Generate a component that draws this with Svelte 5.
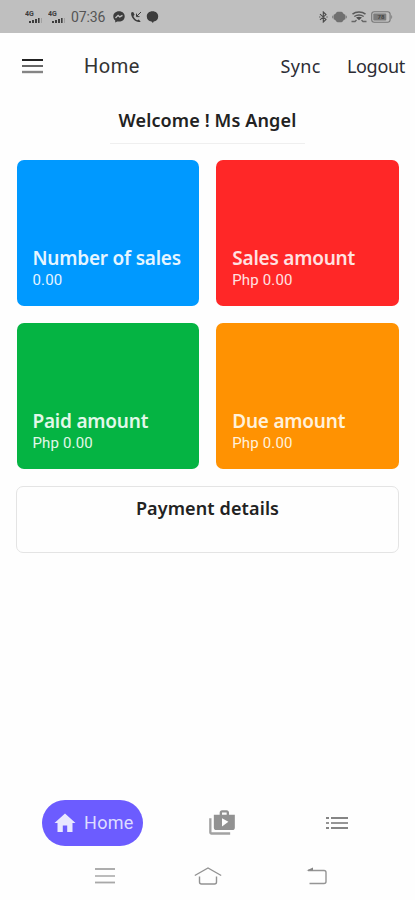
<script lang="ts">
  type Card = { title: string; value: string; tone: string };

  const cards: Card[] = [
    { title: 'Number of sales', value: '0.00', tone: 'blue' },
    { title: 'Sales amount', value: 'Php 0.00', tone: 'red' },
    { title: 'Paid amount', value: 'Php 0.00', tone: 'green' },
    { title: 'Due amount', value: 'Php 0.00', tone: 'orange' },
  ];
</script>

{#snippet signal()}
  <svg class="signal" width="17" height="14" viewBox="0 0 17 14">
    <text x="0" y="5.5">4G</text>
    <path d="M4 11h2v2H4zM7 10h2v3H7zM10 9h2v4h-2zM13 8h1.6v5H13z" fill="#3c3c3c" />
    <path d="M16 8h.8v5H16z" fill="#999" />
  </svg>
{/snippet}

<div class="screen">
  <div class="status">
    <div class="status-left">
      {@render signal()}
      {@render signal()}
      <span class="time">07:36</span>
      <svg class="messenger" width="12" height="12" viewBox="0 0 12 12">
        <path d="M6 .3C2.7.3.3 2.6.3 5.4c0 1.6.7 3 1.9 3.9v2.2l2-1.1c.6.1 1.2.2 1.8.2 3.3 0 5.7-2.3 5.7-5.2S9.3.3 6 .3z" fill="#3c3c3c" />
        <path d="M2.5 7l2.600-2.600 1.700 1.500 2.700-1.500" fill="none" stroke="#c0c0c0" stroke-width="1.3" />
      </svg>
      <svg class="call" width="12" height="12" viewBox="0 0 12 12">
        <path d="M1.5 1.200C.4 3 1.500 6 3.500 8.300s5 3.500 7.200 2.400l-1.900-2.200-1.700.8C5.500 8.500 3.900 6.700 3.400 5l1.200-1.300L3.200 1z" fill="#3c3c3c" />
        <path d="M11 1L6.800 5.200M6.500 2.600v3h3" fill="none" stroke="#3c3c3c" />
      </svg>
      <svg width="13" height="12" viewBox="0 0 13 12">
        <path d="M6.500.3C3 .3.8 2.500.8 5.400c0 2.700 1.900 4.700 4.700 5.100l1.400 1.400.8-1.400c2.700-.4 4.500-2.400 4.500-5.100C12.200 2.500 10 .3 6.500.3z" fill="#3c3c3c" />
      </svg>
    </div>
    <div class="status-right">
      <svg width="9" height="12" viewBox="0 0 9 12">
        <path d="M1 3.200l6 5.200-2.700 2.600V1L7 3.600 1 8.800M.2 6h1.200M7.400 6h1.200" fill="none" stroke="#4a4a4a" stroke-width="1.1" />
      </svg>
      <svg width="15" height="12" viewBox="0 0 15 12">
        <path d="M4.300 1.500L5.500.8h4l1.200.7 1 1.500 1.600.8v4.400l-1.600.8-1 1.500-1.200.7h-4l-1.200-.7-1-1.500-1.600-.8V3.800L3.300 3z" fill="#707070" />
        <path d="M.8 4.800v2.400M14.200 4.800v2.400" stroke="#7c7c7c" stroke-width="1.2" />
      </svg>
      <svg width="16" height="12" viewBox="0 0 16 12">
        <path d="M1.500 3.200C5 .4 11 .4 14.500 3.200M3.300 5.500c3-2 6.400-2 9.400 0" fill="none" stroke="#5a5a5a" stroke-width="1.5" />
        <path d="M5 6.500c1.700-1.100 4.300-1.100 6 0L8 9.300z" fill="#505050" />
        <path d="M.5 10.500H4l1.500-1.500M15.500 10.500H12l-1.500-1.500" fill="none" stroke="#666" stroke-width="1.4" />
      </svg>
      <svg width="22" height="12" viewBox="0 0 22 12">
        <rect x=".7" y=".8" width="18.4" height="10.4" rx="2.5" fill="none" stroke="#777" stroke-width="1.1" />
        <rect x="2.3" y="2.4" width="13" height="7.2" rx="1" fill="#7c7c7c" />
        <path d="M20.300 4c1.200.8 1.200 3.200 0 4z" fill="#777" />
        <text x="6.5" y="8.2" class="charge">78</text>
      </svg>
    </div>
  </div>

  <header>
    <svg class="menu" width="21" height="16" viewBox="0 0 21 16">
      <path d="M0 2h21" stroke="#222" stroke-width="2" />
      <path d="M0 8h21" stroke="#666" stroke-width="2" />
      <path d="M0 14h21" stroke="#858585" stroke-width="2.4" />
    </svg>
    <h1>Home</h1>
    <span class="action sync">Sync</span>
    <span class="action logout">Logout</span>
  </header>

  <main>
    <div class="welcome"><span>Welcome ! Ms Angel</span></div>
    <div class="cards">
      {#each cards as card}
        <div class="card {card.tone}">
          <h2>{card.title}</h2>
          <p>{card.value}</p>
        </div>
      {/each}
    </div>
    <div class="payment"><span>Payment details</span></div>
  </main>

  <nav class="tabs">
    <div class="active">
      <svg width="24" height="24" viewBox="0 0 24 24">
        <path d="M9.800 21v-6.500h4.400V21h5.300v-9h3L12 2.500 1.500 12h3v9z" fill="#e9e8ff" />
      </svg>
      <span>Home</span>
    </div>
    <svg class="shop" width="28" height="28" viewBox="0 0 24 24">
      <path d="M3 8H1v12c0 1.100.9 2 2 2h16v-2H3z" fill="#a2a2a2" />
      <path d="M18 5V3c0-1.100-.9-2-2-2h-4c-1.100 0-2 .9-2 2v2H5v11c0 1.100.9 2 2 2h14c1.100 0 2-.9 2-2V5zm-6-2h4v2h-4zm0 12V8l5.500 3z" fill="#929292" />
    </svg>
    <svg class="list" width="22" height="14" viewBox="0 0 22 14">
      <path d="M0 2h3M5 2h17" stroke="#858585" stroke-width="1.8" />
      <path d="M0 7h3M5 7h17" stroke="#969696" stroke-width="1.8" />
      <path d="M0 12h3M5 12h17" stroke="#858585" stroke-width="1.8" />
    </svg>
  </nav>

  <div class="system">
    <svg width="20" height="18" viewBox="0 0 20 18">
      <path d="M0 2h20" stroke="#8a8a8a" stroke-width="1.4" />
      <path d="M0 9h20" stroke="#a0a0a0" stroke-width="1.4" />
      <path d="M0 15.500h20" stroke="#a8a8a8" stroke-width="1.8" />
    </svg>
    <svg class="home-key" width="28" height="20" viewBox="0 0 28 20">
      <path d="M.8 9.500L14 2l13.200 7.500M5.500 10.500V16q0 2 2 2h13q2 0 2-2v-5.500" fill="none" stroke="#929292" stroke-width="1.4" />
    </svg>
    <svg class="back-key" width="22" height="20" viewBox="0 0 22 20">
      <path d="M2 4.500h16q2 0 2 2v9q0 2-2 2H3.500" fill="none" stroke="#959595" stroke-width="1.4" />
      <path d="M.5 4.600L7 1.600v3z" fill="#858585" />
    </svg>
  </div>
</div>

<style>
  :global(body) {
    margin: 0;
    background: #fff;
  }

  svg {
    display: block;
    flex: none;
  }

  .screen {
    display: flex;
    flex-direction: column;
    width: 415px;
    height: 900px;
    overflow: hidden;
    background: #fefefe;
    font-family: 'Noto Sans', sans-serif;
    color: #222;
  }

  .status {
    display: flex;
    justify-content: space-between;
    align-items: center;
    box-sizing: border-box;
    height: 33px;
    padding: 1px 22px 0 25px;
    background: #bfbfbf;
  }

  .status-left,
  .status-right {
    display: flex;
    align-items: center;
  }

  .status-right {
    gap: 4px;
  }

  .signal {
    margin-right: 6px;
  }

  .signal text {
    font: 700 7px Roboto, sans-serif;
    fill: #3c3c3c;
  }

  .time {
    width: 42px;
    font: 14px/16px Roboto, sans-serif;
    letter-spacing: -0.1px;
    color: #555;
    white-space: nowrap;
  }

  .messenger {
    margin-right: 5px;
  }

  .call {
    margin-right: 4px;
  }

  .charge {
    font: 700 6px Roboto, sans-serif;
    fill: #444;
  }

  header {
    display: flex;
    align-items: center;
    height: 65px;
    padding: 0 10px 0 22px;
  }

  h1 {
    margin: 0 auto 0 41px;
    font: 400 20px/28px Roboto, sans-serif;
    letter-spacing: 0.5px;
    color: #333;
  }

  .action {
    font-size: 18px;
    line-height: 26px;
    color: #2c2c34;
  }

  .sync {
    letter-spacing: 0.4px;
  }

  .logout {
    margin-left: 26px;
    letter-spacing: -0.3px;
  }

  .welcome {
    display: flex;
    justify-content: center;
    box-sizing: border-box;
    width: 195px;
    height: 46px;
    margin: 0 auto;
    padding-top: 9px;
    border-bottom: 1px solid #efefef;
    font-size: 18px;
    font-weight: 600;
    line-height: 26px;
    letter-spacing: 0.13px;
    white-space: nowrap;
  }

  .cards {
    display: grid;
    grid-template-columns: 1fr 1fr;
    gap: 17px;
    margin: 15.5px 16px 17px 16.5px;
  }

  .card {
    display: flex;
    flex-direction: column;
    justify-content: flex-end;
    box-sizing: border-box;
    height: 146px;
    padding: 0 0 16px 16px;
    border-radius: 7px;
  }

  .blue {
    background: #0099ff;
    color: #e6f5ff;
  }

  .red {
    background: #ff2727;
    color: #ffe2e2;
  }

  .green {
    background: #05b443;
    color: #e2f8e9;
  }

  .orange {
    background: #ff9202;
    color: #fff1dc;
  }

  h2 {
    margin: 0 0 1px;
    font-size: 19px;
    font-weight: 600;
    line-height: 24px;
    letter-spacing: -0.22px;
    white-space: nowrap;
  }

  .card p {
    margin: 0;
    font: 400 15px/19px Roboto, sans-serif;
    letter-spacing: 0.15px;
  }

  .payment {
    display: flex;
    justify-content: center;
    box-sizing: border-box;
    height: 67px;
    margin: 0 16px;
    padding-top: 8px;
    border: 1.5px solid #e4e4e4;
    border-radius: 7px;
    font-size: 18px;
    font-weight: 600;
    line-height: 26px;
    letter-spacing: 0.12px;
  }

  .tabs {
    display: flex;
    align-items: center;
    height: 46px;
    margin-top: auto;
    padding: 0 67px 0 42px;
  }

  .active {
    display: flex;
    align-items: center;
    box-sizing: border-box;
    width: 101px;
    height: 46px;
    padding-left: 11px;
    border-radius: 23px;
    background: #6c5cff;
    color: #dedcff;
    font: 400 18px/24px Roboto, sans-serif;
  }

  .active span {
    margin-left: 7px;
    letter-spacing: 0.3px;
  }

  .shop {
    margin-left: 65px;
  }

  .list {
    margin-left: auto;
  }

  .system {
    display: flex;
    align-items: center;
    height: 20px;
    margin: 20px 87px 14px 95px;
  }

  .home-key {
    margin-left: 79px;
  }

  .back-key {
    margin-left: auto;
  }
</style>
